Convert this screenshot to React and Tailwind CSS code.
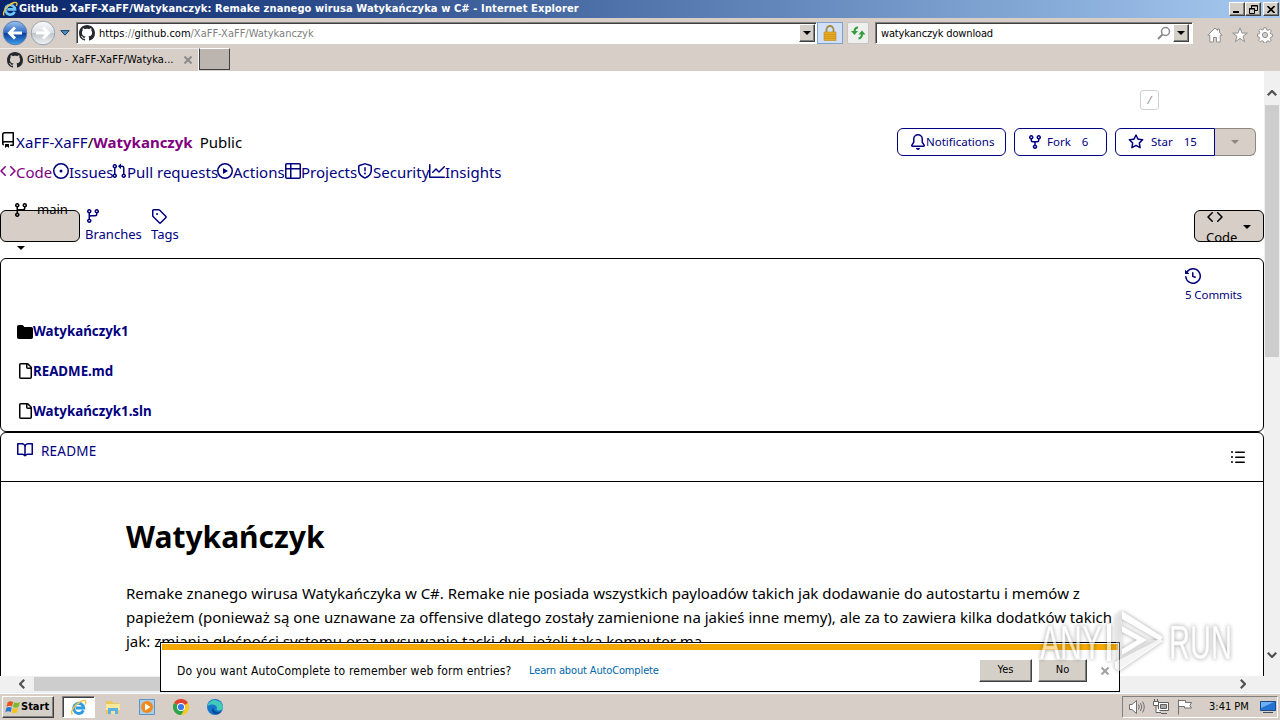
import clsx from 'clsx';

const ICONS = {
  github:
    'M8 0c4.42 0 8 3.58 8 8a8.013 8.013 0 0 1-5.45 7.59c-.4.08-.55-.17-.55-.38 0-.27.01-1.13.01-2.2 0-.75-.25-1.23-.54-1.48 1.78-.2 3.65-.88 3.65-3.95 0-.88-.31-1.59-.82-2.15.08-.2.36-1.02-.08-2.12 0 0-.67-.22-2.2.82-.64-.18-1.32-.27-2-.27-.68 0-1.36.09-2 .27-1.53-1.03-2.2-.82-2.2-.82-.44 1.1-.16 1.92-.08 2.12-.51.56-.82 1.28-.82 2.15 0 3.06 1.86 3.75 3.64 3.95-.23.2-.44.55-.51 1.07-.46.21-1.61.55-2.33-.66-.15-.24-.6-.83-1.23-.82-.67.01-.27.38.01.53.34.19.73.9.82 1.13.16.45.68 1.31 2.69.94 0 .67.01 1.3.01 1.49 0 .21-.15.45-.55.38A7.995 7.995 0 0 1 0 8c0-4.42 3.58-8 8-8Z',
  repo: 'M2 2.5A2.5 2.5 0 0 1 4.5 0h8.75a.75.75 0 0 1 .75.75v12.5a.75.75 0 0 1-.75.75h-2.5a.75.75 0 0 1 0-1.5h1.75v-2h-8a1 1 0 0 0-.714 1.7.75.75 0 1 1-1.072 1.05A2.495 2.495 0 0 1 2 11.5Zm10.5-1h-8a1 1 0 0 0-1 1v6.708A2.486 2.486 0 0 1 4.5 9h8ZM5 12.25a.25.25 0 0 1 .25-.25h3.5a.25.25 0 0 1 .25.25v3.25a.25.25 0 0 1-.4.2l-1.45-1.087a.249.249 0 0 0-.3 0L5.4 15.7a.25.25 0 0 1-.4-.2Z',
  code: 'm11.28 3.22 4.25 4.25a.75.75 0 0 1 0 1.06l-4.25 4.25a.749.749 0 0 1-1.275-.326.749.749 0 0 1 .215-.734L13.94 8l-3.72-3.72a.749.749 0 0 1 .326-1.275.749.749 0 0 1 .734.215Zm-6.56 0a.751.751 0 0 1 1.042.018.751.751 0 0 1 .018 1.042L2.06 8l3.72 3.72a.749.749 0 0 1-.326 1.275.749.749 0 0 1-.734-.215L.47 8.53a.75.75 0 0 1 0-1.06Z',
  issue:
    'M8 9.5a1.5 1.5 0 1 0 0-3 1.5 1.5 0 0 0 0 3ZM8 0a8 8 0 1 1 0 16A8 8 0 0 1 8 0ZM1.5 8a6.5 6.5 0 1 0 13 0 6.5 6.5 0 0 0-13 0Z',
  pull: 'M1.5 3.25a2.25 2.25 0 1 1 3 2.122v5.256a2.251 2.251 0 1 1-1.5 0V5.372A2.25 2.25 0 0 1 1.5 3.25Zm5.677-.177L9.573.677A.25.25 0 0 1 10 .854V2.5h1A2.5 2.5 0 0 1 13.5 5v5.628a2.251 2.251 0 1 1-1.5 0V5a1 1 0 0 0-1-1h-1v1.646a.25.25 0 0 1-.427.177L7.177 3.427a.25.25 0 0 1 0-.354ZM3.75 2.5a.75.75 0 1 0 0 1.5.75.75 0 0 0 0-1.5Zm0 9.5a.75.75 0 1 0 0 1.5.75.75 0 0 0 0-1.5Zm8.25.75a.75.75 0 1 0 1.5 0 .75.75 0 0 0-1.5 0Z',
  play: 'M8 0a8 8 0 1 1 0 16A8 8 0 0 1 8 0ZM1.5 8a6.5 6.5 0 1 0 13 0 6.5 6.5 0 0 0-13 0Zm4.879-2.773 4.264 2.559a.25.25 0 0 1 0 .428l-4.264 2.559A.25.25 0 0 1 6 10.559V5.442a.25.25 0 0 1 .379-.215Z',
  table:
    'M0 1.75C0 .784.784 0 1.75 0h12.5C15.216 0 16 .784 16 1.75v12.5A1.75 1.75 0 0 1 14.25 16H1.75A1.75 1.75 0 0 1 0 14.25ZM6.5 6.5v8h7.75a.25.25 0 0 0 .25-.25V6.5Zm8-1.5V1.75a.25.25 0 0 0-.25-.25H6.5V5Zm-13 1.5v7.75c0 .138.112.25.25.25H5v-8ZM5 5V1.5H1.75a.25.25 0 0 0-.25.25V5Z',
  shield:
    'M7.467.133a1.748 1.748 0 0 1 1.066 0l5.25 1.68A1.75 1.75 0 0 1 15 3.48V7c0 1.566-.32 3.182-1.303 4.682-.983 1.498-2.585 2.813-5.032 3.855a1.697 1.697 0 0 1-1.33 0c-2.447-1.042-4.049-2.357-5.032-3.855C1.32 10.182 1 8.566 1 7V3.48a1.755 1.755 0 0 1 1.217-1.667Zm.61 1.429a.25.25 0 0 0-.153 0l-5.25 1.68a.25.25 0 0 0-.174.238V7c0 1.358.275 2.666 1.057 3.86.784 1.194 2.121 2.34 4.366 3.297a.196.196 0 0 0 .154 0c2.245-.956 3.582-2.104 4.366-3.298C13.225 9.666 13.5 8.36 13.5 7V3.48a.251.251 0 0 0-.174-.237l-5.25-1.68ZM8.75 4.75v3a.75.75 0 0 1-1.5 0v-3a.75.75 0 0 1 1.5 0ZM9 10.5a1 1 0 1 1-2 0 1 1 0 0 1 2 0Z',
  graph:
    'M1.5 1.75V13.5h13.75a.75.75 0 0 1 0 1.5H.75a.75.75 0 0 1-.75-.75V1.75a.75.75 0 0 1 1.5 0Zm14.28 2.53-5.25 5.25a.75.75 0 0 1-1.06 0L7 7.06 4.28 9.78a.751.751 0 0 1-1.042-.018.751.751 0 0 1-.018-1.042l3.25-3.25a.75.75 0 0 1 1.06 0L10 7.94l4.72-4.72a.751.751 0 0 1 1.042.018.751.751 0 0 1 .018 1.042Z',
  branch:
    'M9.5 3.25a2.25 2.25 0 1 1 3 2.122V6A2.5 2.5 0 0 1 10 8.5H6a1 1 0 0 0-1 1v1.128a2.251 2.251 0 1 1-1.5 0V5.372a2.25 2.25 0 1 1 1.5 0v1.836A2.493 2.493 0 0 1 6 7h4a1 1 0 0 0 1-1v-.628A2.25 2.25 0 0 1 9.5 3.25Zm-6 0a.75.75 0 1 0 1.5 0 .75.75 0 0 0-1.5 0Zm8.25-.75a.75.75 0 1 0 0 1.5.75.75 0 0 0 0-1.5ZM4.25 12a.75.75 0 1 0 0 1.5.75.75 0 0 0 0-1.5Z',
  tag: 'M1 7.775V2.75C1 1.784 1.784 1 2.75 1h5.025c.464 0 .91.184 1.238.513l6.25 6.25a1.75 1.75 0 0 1 0 2.474l-5.026 5.026a1.75 1.75 0 0 1-2.474 0l-6.25-6.25A1.752 1.752 0 0 1 1 7.775Zm1.5 0c0 .066.026.13.073.177l6.25 6.25a.25.25 0 0 0 .354 0l5.025-5.025a.25.25 0 0 0 0-.354l-6.25-6.25a.25.25 0 0 0-.177-.073H2.75a.25.25 0 0 0-.25.25ZM6 5a1 1 0 1 1 0 2 1 1 0 0 1 0-2Z',
  bell: 'M8 16a2 2 0 0 0 1.985-1.75c.017-.137-.097-.25-.235-.25h-3.5c-.138 0-.252.113-.235.25A2 2 0 0 0 8 16ZM3 5a5 5 0 0 1 10 0v2.947c0 .05.015.098.042.139l1.703 2.555A1.519 1.519 0 0 1 13.482 13H2.518a1.516 1.516 0 0 1-1.263-2.36l1.703-2.554A.255.255 0 0 0 3 7.947Zm5-3.5A3.5 3.5 0 0 0 4.5 5v2.947c0 .346-.102.683-.294.97l-1.703 2.556a.017.017 0 0 0-.003.01l.001.006c0 .002.002.004.004.006l.006.004.007.001h10.964l.007-.001.006-.004.004-.006.001-.007a.017.017 0 0 0-.003-.01l-1.703-2.554a1.745 1.745 0 0 1-.294-.97V5A3.5 3.5 0 0 0 8 1.5Z',
  fork: 'M5 5.372v.878c0 .414.336.75.75.75h4.5a.75.75 0 0 0 .75-.75v-.878a2.25 2.25 0 1 1 1.5 0v.878a2.25 2.25 0 0 1-2.25 2.25h-1.5v2.128a2.251 2.251 0 1 1-1.5 0V8.5h-1.5A2.25 2.25 0 0 1 3.5 6.25v-.878a2.25 2.25 0 1 1 1.5 0ZM5 3.25a.75.75 0 1 0-1.5 0 .75.75 0 0 0 1.5 0Zm6.75.75a.75.75 0 1 0 0-1.5.75.75 0 0 0 0 1.5Zm-3 8.75a.75.75 0 1 0-1.5 0 .75.75 0 0 0 1.5 0Z',
  star: 'M8 .25a.75.75 0 0 1 .673.418l1.882 3.815 4.21.612a.75.75 0 0 1 .416 1.279l-3.046 2.97.719 4.192a.751.751 0 0 1-1.088.791L8 12.347l-3.766 1.98a.75.75 0 0 1-1.088-.79l.72-4.194L.818 6.374a.75.75 0 0 1 .416-1.28l4.21-.611L7.327.668A.75.75 0 0 1 8 .25Zm0 2.445L6.615 5.5a.75.75 0 0 1-.564.41l-3.097.45 2.24 2.184a.75.75 0 0 1 .216.664l-.528 3.084 2.769-1.456a.75.75 0 0 1 .698 0l2.77 1.456-.53-3.084a.75.75 0 0 1 .216-.664l2.24-2.183-3.096-.45a.75.75 0 0 1-.564-.41L8 2.694Z',
  history:
    'm.427 1.927 1.215 1.215a8.002 8.002 0 1 1-1.6 5.685.75.75 0 1 1 1.493-.154 6.5 6.5 0 1 0 1.18-4.458l1.358 1.358A.25.25 0 0 1 3.896 6H.25A.25.25 0 0 1 0 5.75V2.104a.25.25 0 0 1 .427-.177ZM7.75 4a.75.75 0 0 1 .75.75v2.992l2.028.812a.75.75 0 0 1-.557 1.392l-2.5-1A.751.751 0 0 1 7 8.25v-3.5A.75.75 0 0 1 7.75 4Z',
  folder:
    'M1.75 1A1.75 1.75 0 0 0 0 2.75v10.5C0 14.216.784 15 1.75 15h12.5A1.75 1.75 0 0 0 16 13.25v-8.5A1.75 1.75 0 0 0 14.25 3H7.5a.25.25 0 0 1-.2-.1l-.9-1.2C6.07 1.26 5.55 1 5 1H1.75Z',
  file: 'M2 1.75C2 .784 2.784 0 3.75 0h6.586c.464 0 .909.184 1.237.513l2.914 2.914c.329.328.513.773.513 1.237v9.586A1.75 1.75 0 0 1 13.25 16h-9.5A1.75 1.75 0 0 1 2 14.25Zm1.75-.25a.25.25 0 0 0-.25.25v12.5c0 .138.112.25.25.25h9.5a.25.25 0 0 0 .25-.25V6h-2.75A1.75 1.75 0 0 1 9 4.25V1.5Zm6.75.062V4.25c0 .138.112.25.25.25h2.688l-.011-.013-2.914-2.914-.013-.011Z',
  book: 'M0 1.75A.75.75 0 0 1 .75 1h4.253c1.227 0 2.317.59 3 1.501A3.743 3.743 0 0 1 11.006 1h4.245a.75.75 0 0 1 .75.75v10.5a.75.75 0 0 1-.75.75h-4.507a2.25 2.25 0 0 0-1.591.659l-.622.621a.75.75 0 0 1-1.06 0l-.622-.621A2.25 2.25 0 0 0 5.258 13H.75a.75.75 0 0 1-.75-.75Zm7.251 10.324.004-5.073-.002-2.253A2.25 2.25 0 0 0 5.003 2.5H1.5v9h3.757a3.75 3.75 0 0 1 1.994.574ZM8.755 4.75l-.004 7.322a3.752 3.752 0 0 1 1.992-.572H14.5v-9h-3.495a2.25 2.25 0 0 0-2.25 2.25Z',
  list: 'M5.75 2.5h8.5a.75.75 0 0 1 0 1.5h-8.5a.75.75 0 0 1 0-1.5Zm0 5h8.5a.75.75 0 0 1 0 1.5h-8.5a.75.75 0 0 1 0-1.5Zm0 5h8.5a.75.75 0 0 1 0 1.5h-8.5a.75.75 0 0 1 0-1.5ZM2 14a1 1 0 1 1 0-2 1 1 0 0 1 0 2Zm1-6a1 1 0 1 1-2 0 1 1 0 0 1 2 0ZM2 4a1 1 0 1 1 0-2 1 1 0 0 1 0 2Z',
};

const UI = 'font-["DejaVu_Sans_Condensed","DejaVu_Sans",sans-serif] [font-stretch:condensed]';
const BEVEL =
  'border border-t-white border-l-white border-r-[#404040] border-b-[#404040] bg-[#d4d0c8] shadow-[inset_-1px_-1px_0_#808080]';
const SUNKEN =
  'border border-t-[#808080] border-l-[#808080] border-r-white border-b-white shadow-[inset_1px_1px_0_#404040] bg-white';

function Octicon({ name, className }) {
  return (
    <svg viewBox="0 0 16 16" fill="currentColor" className={clsx('size-4 shrink-0', className)}>
      <path d={ICONS[name]} />
    </svg>
  );
}

function Caret({ className }) {
  return (
    <svg viewBox="0 0 8 4" fill="currentColor" className={clsx('h-1 w-2 shrink-0', className)}>
      <path d="M0 0h8L4 4z" />
    </svg>
  );
}

function IeLogo({ className, light }) {
  return (
    <svg viewBox="0 0 18 18" fill="none" className={clsx('shrink-0', className)}>
      <path
        d="M14.200 12A5.400 5.400 0 1 1 14.600 9.500H6"
        stroke={light ? '#6cc4f6' : '#2f9be0'}
        strokeWidth="3"
      />
      <path d="M5 8.200c1-2.600 3.400-3.700 5-3.500" stroke="#c4ecff" strokeWidth="1" />
      <path
        d="M2.600 16.300C.4 14.800 2.500 9.500 7 5.500 11 2 15.500.6 16.600 2.400c.5.9.1 2.200-.5 3.200"
        stroke="#f2c53d"
        strokeWidth="1.500"
      />
    </svg>
  );
}

function TitleBar() {
  return (
    <div
      className={`${UI} flex h-[18px] shrink-0 items-center bg-linear-to-r from-[#0a246a] to-[#a6caf0] pl-0.5 pr-px text-white`}
    >
      <IeLogo light className="size-4" />
      <span className="ml-px mt-px whitespace-nowrap text-[11px] font-bold tracking-[0.11px]">
        GitHub - XaFF-XaFF/Watykanczyk: Remake znanego wirusa Watykańczyka w C# - Internet Explorer
      </span>
      <div className="ml-auto flex text-black">
        <button className={`${BEVEL} flex h-3.5 w-4 items-end pb-0.5 pl-[3px]`}>
          <span className="h-0.5 w-1.5 bg-black" />
        </button>
        <button className={`${BEVEL} flex h-3.5 w-4 items-center justify-center`}>
          <svg viewBox="0 0 9 9" className="size-[9px]" fill="none" stroke="#000">
            <path d="M2.500 3V.5h6v5H6M2 1h7M.5 3.500h5v5h-5zM0 4h6" />
          </svg>
        </button>
        <button className={`${BEVEL} ml-0.5 flex h-3.5 w-4 items-center justify-center`}>
          <svg viewBox="0 0 8 7" className="h-[7px] w-2" fill="none" stroke="#000" strokeWidth="1.600">
            <path d="M.5 0l7 7M7.500 0l-7 7" />
          </svg>
        </button>
      </div>
    </div>
  );
}

function NavArrow({ back }) {
  return (
    <svg viewBox="0 0 26 26" className="size-[26px] shrink-0">
      <defs>
        <linearGradient id={back ? 'backFill' : 'fwdFill'} x1="0" y1="0" x2="0" y2="1">
          <stop offset="0" stopColor={back ? '#9cc4ee' : '#fbfbfb'} />
          <stop offset=".48" stopColor={back ? '#2f6cc4' : '#dcdfe4'} />
          <stop offset=".52" stopColor={back ? '#0d3f9c' : '#c0c5cc'} />
          <stop offset="1" stopColor={back ? '#3fa0ee' : '#f2f4f6'} />
        </linearGradient>
      </defs>
      <circle
        cx="13"
        cy="13"
        r="11.800"
        fill={back ? 'url(#backFill)' : 'url(#fwdFill)'}
        stroke={back ? '#5d7fb0' : '#9aa3b0'}
      />
      <path
        d={back ? 'M20 13H8M13 7.500L7.500 13l5.500 5.500' : 'M6 13h12M13 7.500l5.500 5.500-5.500 5.500'}
        fill="none"
        stroke="#fff"
        strokeWidth="3"
      />
    </svg>
  );
}

function Toolbar() {
  return (
    <div className={`${UI} flex h-[30px] shrink-0 items-center pl-0.5 text-[11px]`}>
      <NavArrow back />
      <span className="ml-0.5 flex">
        <NavArrow />
      </span>
      <svg viewBox="0 0 10 6" className="ml-1 h-1.5 w-2.5 shrink-0">
        <path d="M.8.6h8.400L5 5.200z" fill="#4b8fc4" stroke="#1d3f66" />
      </svg>
      <div className={`${SUNKEN} ml-1.5 flex h-[22px] w-[741px] shrink-0 items-center pl-0.5 pr-px`}>
        <Octicon name="github" className="text-[#24292e]" />
        <span className="ml-1 mt-0.5 whitespace-nowrap text-[#808080]">
          <span className="text-black">https</span>://<span className="text-black">github.com</span>
          /XaFF-XaFF/Watykanczyk
        </span>
        <button className={`${BEVEL} ml-auto flex h-[18px] w-4 items-center justify-center`}>
          <Caret />
        </button>
      </div>
      <button className="flex h-[22px] w-[26px] shrink-0 items-center justify-center border border-[#7da2ce] bg-[#cfe0f8]">
        <svg viewBox="0 0 14 16" className="h-4 w-3.5">
          <path d="M3.500 8V4.500a3.500 3.500 0 0 1 7 0V8" fill="none" stroke="#a88a3a" strokeWidth="1.800" />
          <path d="M1 7h12v8.500H1z" fill="#e8ad28" stroke="#c08818" strokeWidth=".6" />
          <path d="M1 9.500h12M1 11.500h12M1 13.500h12" stroke="#c98d14" strokeWidth=".7" />
        </svg>
      </button>
      <button className="ml-1 flex h-[22px] w-[22px] shrink-0 items-center justify-center rounded-[2px] border border-[#c4c4c4] bg-[#efefed]">
        <svg viewBox="0 0 16 16" className="size-4" fill="none" stroke="#2f9e3a" strokeWidth="2">
          <path d="M8 2.500Q4.500 2.500 4.500 7M8.500 13.500Q12 13 12 9" />
          <path d="M1 6h7l-3.500 4zM8.500 9.500h7L12 5.500z" fill="#2f9e3a" stroke="none" />
        </svg>
      </button>
      <div className={`${SUNKEN} ml-1.5 flex h-[22px] w-[318px] shrink-0 items-center pl-[5px] pr-[3px]`}>
        <span className="mt-0.5 whitespace-nowrap tracking-[-0.15px]">watykanczyk download</span>
        <svg viewBox="0 0 14 14" className="ml-auto mr-0.5 size-3.5" fill="none" stroke="#8a8a8a">
          <circle cx="8.500" cy="5.500" r="4" strokeWidth="1.500" />
          <path d="M5.500 8.500L1 13" strokeWidth="2" />
        </svg>
        <button className={`${BEVEL} flex h-[18px] w-4 items-center justify-center`}>
          <Caret />
        </button>
      </div>
      <div className="ml-3.5 flex items-center gap-[9px] pt-1">
        <svg viewBox="0 0 16 16" className="size-4" fill="#fff" stroke="#909090">
          <path d="M8 1L.8 8.200h2V15h3.700v-4.500h3V15h3.700V8.200h2L12.500 5.500V2h-2v1.500z" />
        </svg>
        <svg viewBox="0 0 16 16" className="size-4" fill="#fff" stroke="#909090">
          <path d="M8 .9l2 5.200h5.300L11 9.300l1.700 5.400L8 11.500l-4.700 3.200L5 9.300.7 6.100H6z" />
        </svg>
        <svg viewBox="0 0 16 16" className="size-4" fill="#fff" stroke="#909090">
          <path d="M6.800.8h2.400l.4 2 1.500.6 1.700-1.100 1.600 1.600-1.100 1.700.6 1.400 1.700.4v2.200l-1.800.5-.6 1.500 1.100 1.700-1.600 1.600-1.700-1.100-1.400.6-.4 1.600H6.800l-.4-1.700-1.500-.6-1.700 1.100-1.600-1.600 1.100-1.700-.6-1.400-1.600-.4V7.200l1.700-.4.600-1.500-1.100-1.700 1.600-1.600 1.700 1.100 1.400-.6z" />
          <circle cx="8" cy="8" r="2.600" fill="#d4d0c8" />
        </svg>
      </div>
    </div>
  );
}

function TabStrip() {
  return (
    <div className={`${UI} flex h-[23px] shrink-0 text-[11px]`}>
      <div className="flex h-full w-[199px] items-center border-t border-r border-t-white/60 border-r-white/80 pl-[7px]">
        <Octicon name="github" className="text-[#24292e]" />
        <span className="ml-1 mt-px whitespace-nowrap tracking-[0.06px]">GitHub - XaFF-XaFF/Watyka...</span>
        <svg viewBox="0 0 8 8" className="ml-2.5 size-2" stroke="#8c8c8c" strokeWidth="2">
          <path d="M.5.5l7 7M7.500.5l-7 7" />
        </svg>
      </div>
      <div className="h-[22px] w-[31px] border border-t-white border-l-[#404040] border-r-[#404040] border-b-[#404040] bg-[#bcb4ae]" />
    </div>
  );
}

const NAV = [
  { icon: 'code', label: 'Code', className: 'w-[53px] text-[#800080]' },
  { icon: 'issue', label: 'Issues', className: 'w-[58px]' },
  { icon: 'pull', label: 'Pull requests', className: 'w-[106px]' },
  { icon: 'play', label: 'Actions', className: 'w-[68px]' },
  { icon: 'table', label: 'Projects', className: 'w-[72px]' },
  { icon: 'shield', label: 'Security', className: 'w-[72px]' },
  { icon: 'graph', label: 'Insights', className: 'w-[70px]' },
];

const FILES = [
  { icon: 'folder', name: 'Watykańczyk1' },
  { icon: 'file', name: 'README.md' },
  { icon: 'file', name: 'Watykańczyk1.sln' },
];

function RepoHeader() {
  return (
    <>
      <div className="flex h-[57px] shrink-0 items-start justify-end pr-[105px] pt-[19px]">
        <span className="flex h-5 w-[19px] items-center justify-center rounded-[3px] border border-[#d0d0d0] text-[11px] italic text-[#8c8c8c]">
          /
        </span>
      </div>
      <div className="flex h-7 shrink-0 pr-2">
        <div className="flex items-center whitespace-nowrap text-[15px]">
          <Octicon name="repo" className="-mt-1" />
          <a className="tracking-[0.15px] text-[#000080]">XaFF-XaFF</a>
          <span>/</span>
          <a className="font-bold text-[#800080]">Watykanczyk</a>
          <span className="ml-[7px]">Public</span>
        </div>
        <div className="ml-auto flex text-[11.5px] text-[#000080]">
          <a className="flex w-[109px] items-center rounded-md border border-current pl-3">
            <Octicon name="bell" />
            Notifications
          </a>
          <a className="ml-2 flex w-[93px] items-center rounded-md border border-current pl-3">
            <Octicon name="fork" />
            <span className="ml-1">Fork</span>
            <span className="ml-[11px]">6</span>
          </a>
          <a className="ml-2 flex w-[100px] items-center rounded-l-md border border-current pl-3">
            <Octicon name="star" />
            <span className="ml-[7px]">Star</span>
            <span className="ml-[11px]">15</span>
          </a>
          <button className="flex w-[41px] items-center justify-center rounded-r-md border border-l-0 border-[#8c8880] bg-[#d6cec7] text-[#8c8880]">
            <Caret />
          </button>
        </div>
      </div>
      <nav className="flex h-8 shrink-0 items-center whitespace-nowrap text-[15px] text-[#000080]">
        {NAV.map((item) => (
          <a key={item.label} className={clsx('flex items-center', item.className)}>
            <Octicon name={item.icon} className="-mt-0.5" />
            {item.label}
          </a>
        ))}
      </nav>
    </>
  );
}

function BranchBar() {
  return (
    <div className="flex h-[70px] shrink-0 items-start pt-[22px] text-[13px] text-[#000080]">
      <button className="relative h-8 w-20 rounded-md border border-black bg-[#d6cec7] text-black">
        <span className="absolute -top-[11px] left-3 flex items-center">
          <Octicon name="branch" />
          <span className="ml-2">main</span>
        </span>
        <Caret className="absolute left-4 top-[35px]" />
      </button>
      <a className="ml-[5px] -mt-[3px] flex w-[66px] flex-col leading-[19px]">
        <Octicon name="branch" className="mt-px" />
        <span className="mt-px">Branches</span>
      </a>
      <a className="-mt-[3px] flex flex-col leading-[19px]">
        <Octicon name="tag" className="mt-px" />
        <span className="mt-px">Tags</span>
      </a>
      <button className="relative ml-auto h-8 w-[70px] rounded-md border border-black bg-[#d6cec7] text-black">
        <Octicon name="code" className="absolute -top-0.5 left-3" />
        <span className="absolute left-[11px] top-[17px]">Code</span>
        <Caret className="absolute right-3 top-3.5" />
      </button>
    </div>
  );
}

function FileTable() {
  return (
    <div className="flex h-[174px] shrink-0 flex-col rounded-md border border-black">
      <div className="flex h-[53px] justify-end pr-5 pt-[9px] text-[11.5px] text-[#000080]">
        <a className="flex w-[58px] flex-col">
          <Octicon name="history" />
          <span className="mt-0.5 whitespace-nowrap tracking-[-0.1px]">5 Commits</span>
        </a>
      </div>
      {FILES.map((file) => (
        <div key={file.name} className="flex h-10 items-center pl-4 text-[13.3px] font-bold">
          <Octicon name={file.icon} />
          <a className="mt-px text-[#000080]">{file.name}</a>
        </div>
      ))}
    </div>
  );
}

function Readme() {
  return (
    <div className="flex h-[400px] shrink-0 flex-col rounded-md border border-black">
      <div className="flex h-[49px] items-start justify-between border-b border-black pl-4 pr-[17px]">
        <a className="mt-2 flex items-center text-[13.500px] text-[#000080]">
          <Octicon name="book" className="-mt-0.5" />
          <span className="ml-2 tracking-[0.2px]">README</span>
        </a>
        <Octicon name="list" className="mt-4" />
      </div>
      <article className="pl-[125px] pt-8">
        <h1 className="text-[30px] font-bold leading-[46px]">Watykańczyk</h1>
        <p className="mt-[21px] whitespace-nowrap text-[15px] leading-6">
          Remake znanego wirusa Watykańczyka w C#. Remake nie posiada wszystkich payloadów takich jak
          dodawanie do autostartu i memów z
          <br />
          papieżem (ponieważ są one uznawane za offensive dlatego zostały zamienione na jakieś inne
          memy), ale za to zawiera kilka dodatków takich
          <br />
          jak: zmiania głośności systemu oraz wysuwanie tacki dvd, jeżeli taka komputer ma.
        </p>
      </article>
    </div>
  );
}

function Chevron({ className }) {
  return (
    <svg viewBox="0 0 10 6" fill="none" stroke="#505050" strokeWidth="2.200" className={clsx('h-1.5 w-2.5', className)}>
      <path d="M.8 5.200L5 1l4.200 4.200" />
    </svg>
  );
}

function VerticalScroll() {
  return (
    <div className="flex w-4 shrink-0 flex-col items-center bg-[#f0f0f0] pt-[19px]">
      <Chevron />
      <div className="mt-[9px] h-[252px] w-3.5 bg-[#cdcdcd]" />
      <Chevron className="mt-auto mb-[18px] rotate-180" />
    </div>
  );
}

function HorizontalScroll() {
  return (
    <div className="flex h-4 shrink-0 items-center bg-[#f0f0f0] pl-[17px] pr-8">
      <Chevron className="-rotate-90" />
      <div className="ml-[7px] h-3.5 w-[900px] bg-[#cdcdcd]" />
      <Chevron className="ml-auto rotate-90" />
    </div>
  );
}

function AutoCompletePrompt() {
  return (
    <div
      className={`${UI} absolute left-40 top-[642px] flex h-[50px] w-[960px] flex-col border border-black bg-white px-px pt-px`}
    >
      <div className="h-1.5 shrink-0 bg-[#f5a900]" />
      <div className="flex flex-1 items-center pl-[15px] pr-[5px] text-xs">
        <span className="w-[352px] whitespace-nowrap tracking-[0.2px]">
          Do you want AutoComplete to remember web form entries?
        </span>
        <a className="mt-px whitespace-nowrap text-[11px] tracking-[-0.14px] text-[#0066aa]">
          Learn about AutoComplete
        </a>
        <button className={`${BEVEL} ml-auto h-[23px] w-[53px] text-[11px]`}>Yes</button>
        <button className={`${BEVEL} ml-1.5 h-[23px] w-[49px] text-[11px]`}>No</button>
        <svg viewBox="0 0 8 8" className="ml-3.5 mr-1 size-2" stroke="#a0a0a0" strokeWidth="2">
          <path d="M.5.5l7 7M7.500.5l-7 7" />
        </svg>
      </div>
    </div>
  );
}

function Watermark() {
  return (
    <svg
      viewBox="0 0 210 80"
      className="pointer-events-none absolute left-[1030px] top-[602px] h-20 w-[210px] overflow-visible opacity-60 drop-shadow-[0_0_2px_rgba(0,0,0,0.6)]"
    >
      <g
        fill="#fff"
        stroke="#e4e4e4"
        strokeWidth=".6"
        fontFamily="'Liberation Sans Narrow', 'Liberation Sans', sans-serif"
        fontSize="48"
      >
        <text x="10" y="57" textLength="62" lengthAdjust="spacingAndGlyphs">ANY</text>
        <text x="139" y="57" textLength="63" lengthAdjust="spacingAndGlyphs">RUN</text>
      </g>
      <path
        d="M77 22h4v37h-4zM92 9l41 26-3 4-38-22zM92 24l25 14-25 15v-6l15-9-15-8zM85 60l45-23 3 2-44 30-4-3z"
        fill="#fff"
      />
      <path d="M85 14l7-5v44l25-15 16 0-46 31z" fill="#e2e2e2" fillOpacity=".6" />
    </svg>
  );
}

function Taskbar() {
  return (
    <div className={`${UI} flex h-7 shrink-0 items-start border-t border-[#e6eef8] bg-[#d6cec7] pt-[3px] text-[11px] shadow-[inset_0_1px_0_#fff]`}>
      <button className={`${BEVEL} ml-0.5 flex h-[22px] w-[52px] items-center pl-0.5 font-bold`}>
        <svg viewBox="0 0 16 16" className="size-4 shrink-0">
          <path d="M2.500 3.500C4.500 2 6 2 8 3L7 7.500C5 6.500 3.500 6.700 1.500 8z" fill="#e8501e" />
          <path d="M9 3.300c2 1 3.500 1 5.800 0L13.500 8c-2 1-3.600 1-5.500 0z" fill="#7cb82a" />
          <path d="M1.300 9c2-1.300 3.500-1.300 5.500-.3L5.700 13c-2-1-3.500-.8-5.400.3z" fill="#2a78d0" />
          <path d="M7.800 9c2 1 3.500 1 5.500 0L12 13.500c-2 1-3.500 1-5.300 0z" fill="#f8c21c" />
        </svg>
        <span>Start</span>
      </button>
      <div className={`${SUNKEN} ml-2 flex h-[22px] w-[33px] items-center justify-center`}>
        <IeLogo className="size-[17px]" />
      </div>
      <svg viewBox="0 0 16 16" className="ml-2.5 mt-[3px] size-4">
        <path d="M1 2h6l1 2h6v11H1z" fill="#ecc75c" />
        <path d="M1 5h14v6H1z" fill="#fbe89a" />
        <path d="M3 9h10v6H3z" fill="#5fb0e4" />
        <path d="M6 12h4v3H6z" fill="#f3e3a0" />
      </svg>
      <svg viewBox="0 0 16 16" className="ml-[18px] mt-[3px] size-4">
        <path d="M.5.5h15v15H.5z" fill="#a9cfee" stroke="#5b93c4" />
        <circle cx="8" cy="8" r="6" fill="#f08a1c" />
        <path d="M6 4.500L11.500 8 6 11.500z" fill="#fff" />
      </svg>
      <svg viewBox="0 0 16 16" className="ml-[18px] mt-[3px] size-4">
        <circle cx="8" cy="8" r="8" fill="#f7c81e" />
        <path d="M8 8L1.070 4A8 8 0 0 1 14.930 4z" fill="#dd4334" />
        <path d="M8 8L1.070 4A8 8 0 0 0 8 16l3-5z" fill="#2da44e" />
        <circle cx="8" cy="8" r="4" fill="#fff" />
        <circle cx="8" cy="8" r="3.100" fill="#3b78e7" />
      </svg>
      <svg viewBox="0 0 16 16" className="ml-[18px] mt-[3px] size-4">
        <circle cx="8" cy="8" r="8" fill="#1576cc" />
        <path d="M.3 7A8 8 0 0 1 16 8.500c-.3 2-2 3-4 3-3 0-2.500-1.500-2-2.500C10 5.500 4 4 .3 7z" fill="#43cbb8" />
        <path d="M6.500 8.500c-.5 2.500 2 5 5 4.500 1.500 0 2.800-.8 3.300-1.300C13 15 9 16.500 6 14 4 12 4.500 9.500 6.500 8.500z" fill="#0c4a98" />
      </svg>
      <div className="ml-auto mr-0.5 flex h-[22px] w-[156px] items-center border border-t-[#808080] border-l-[#808080] border-r-white border-b-white pl-1.5">
        <svg viewBox="0 0 16 16" className="size-4" fill="#fff" stroke="#707070">
          <path d="M.5 5.500H3L7.500 1.500v13L3 10.500H.5z" />
          <path d="M9.500 5.500q1.500 2.500 0 5M11.500 4q2.500 4 0 8M13.500 2.500q3.500 5.500 0 11" fill="none" />
        </svg>
        <svg viewBox="0 0 16 16" className="ml-2 size-4" fill="#fff" stroke="#606060">
          <path d="M5.500 3.500h10v8h-10z" />
          <path d="M7.500 5.500h6v4h-6z" fill="#a8a8a8" />
          <path d="M.5 2.500h5v4h-5zM1.500 0v2M4.500 0v2M3 7v6.500h5M8 14.500h6" />
        </svg>
        <svg viewBox="0 0 16 16" className="ml-2 size-4" fill="#fff" stroke="#707070">
          <path d="M1.500 15.500v-15M1.500 1.500h7v2h6l-1.500 3 1.500 2.500h-7V7.500h-6" />
        </svg>
        <span className="ml-4 mt-px whitespace-nowrap">3:41 PM</span>
        <svg viewBox="0 0 16 14" className="ml-auto mr-px h-3.5 w-4">
          <path d="M.5 1.500h15v9H.5z" fill="#2472d4" stroke="#1a4a8c" />
          <path d="M1 2h13L1 8z" fill="#6db0f4" />
          <path d="M3 12.500h10" stroke="#405060" />
        </svg>
      </div>
    </div>
  );
}

export default function App() {
  return (
    <div className="relative flex h-[720px] w-[1280px] flex-col overflow-hidden bg-[#d6cec7] text-black">
      <TitleBar />
      <Toolbar />
      <TabStrip />
      <div className="flex min-h-0 flex-1">
        <main className='flex w-[1264px] flex-col overflow-hidden bg-white font-["Noto_Sans","Open_Sans",sans-serif]'>
          <RepoHeader />
          <BranchBar />
          <FileTable />
          <Readme />
        </main>
        <VerticalScroll />
      </div>
      <HorizontalScroll />
      <Taskbar />
      <AutoCompletePrompt />
      <Watermark />
    </div>
  );
}
